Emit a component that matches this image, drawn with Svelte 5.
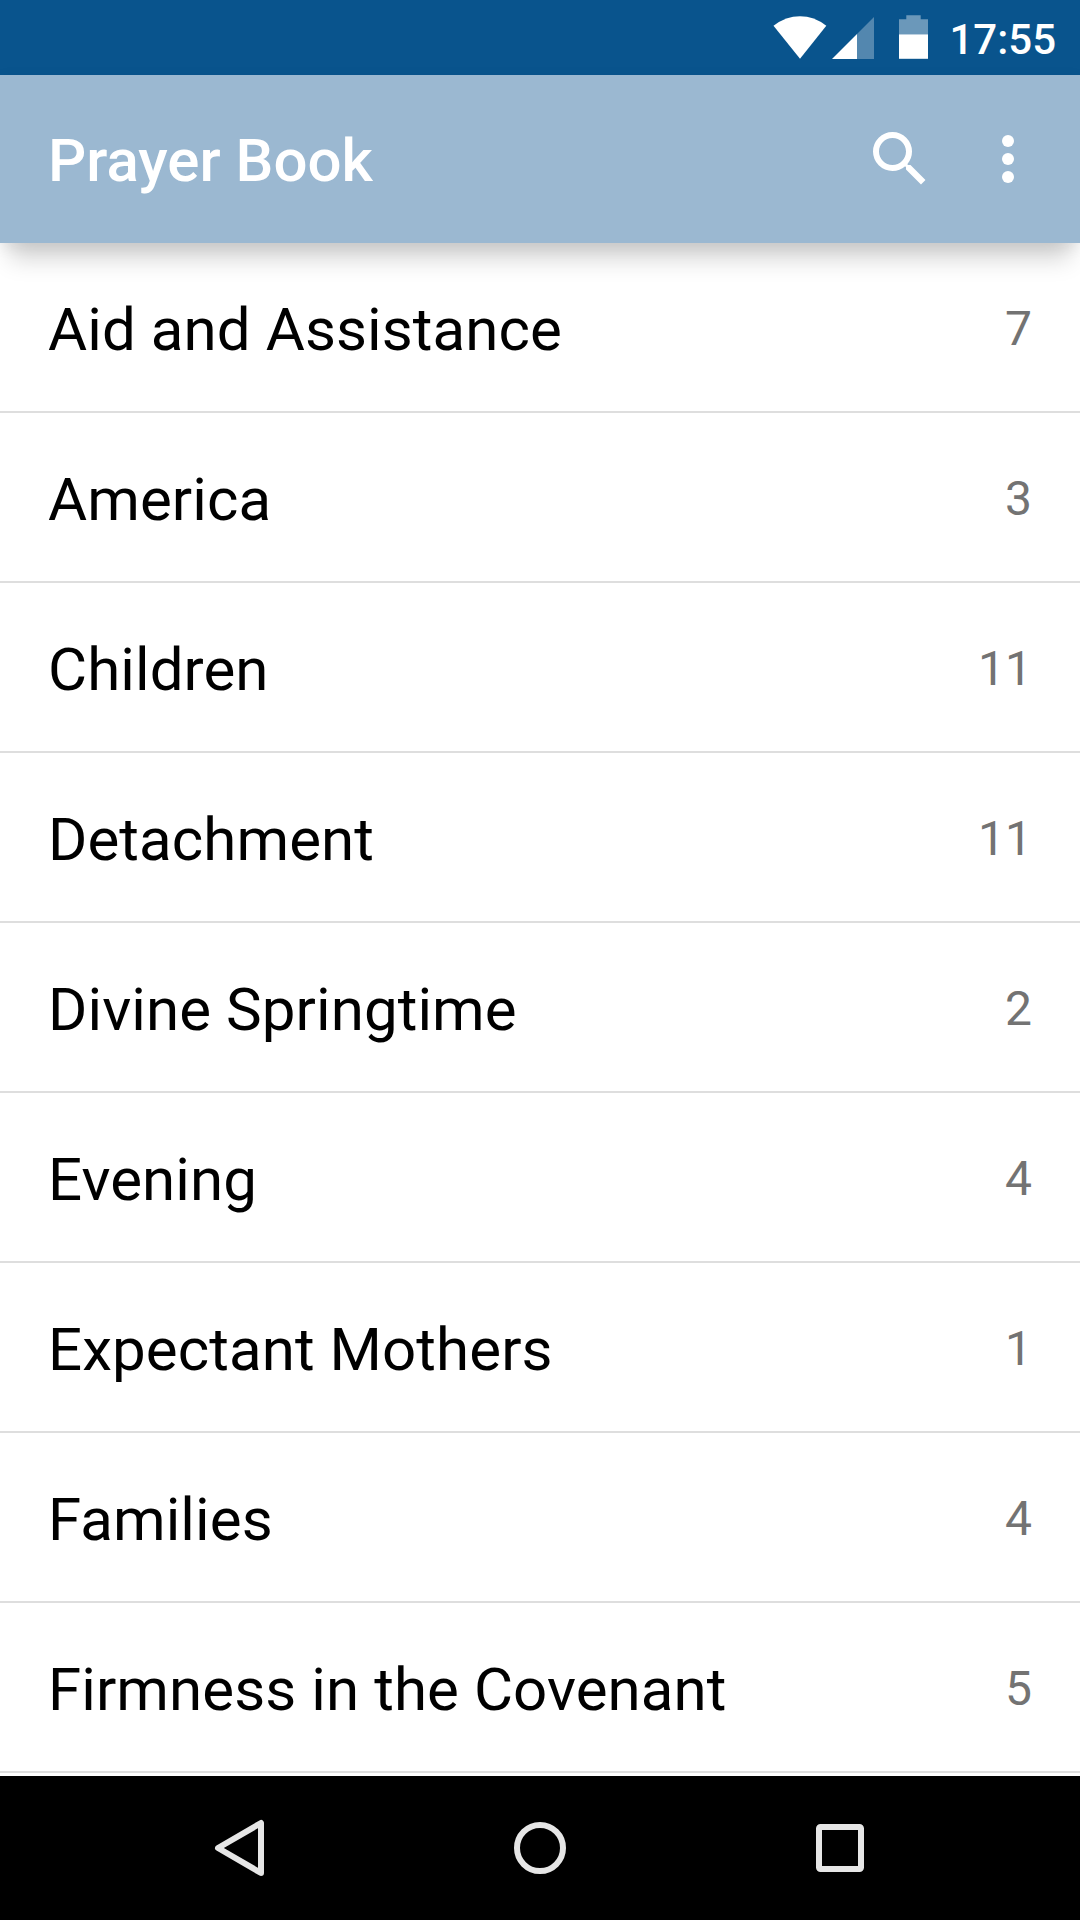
<script>
  const rows = [
    ['Aid and Assistance', 7], ['America', 3], ['Children', 11],
    ['Detachment', 11], ['Divine Springtime', 2], ['Evening', 4],
    ['Expectant Mothers', 1], ['Families', 4], ['Firmness in the Covenant', 5]
  ];
</script>

<div class="screen">
  <div class="status">
    <svg class="wifi" width="54" height="43" viewBox="0 0 54 43"><path d="M.5 9.7Q13 .3 27 .3T53.3 9.7L27 42.8Z" fill="#fff"/></svg>
    <svg class="cell" width="42" height="42" viewBox="0 0 42 42"><path d="M42 0V42H25V17Z" fill="#fff" fill-opacity=".3"/><path d="M25 17V42H0Z" fill="#fff"/></svg>
    <svg class="battery" width="29" height="44" viewBox="0 0 29 44"><path d="M7.3 .3H21.7V4.2H29V19.3H0V4.2H7.3Z" fill="#fff" fill-opacity=".4"/><path d="M0 19.3H29V43.8H0Z" fill="#fff"/></svg>
    <span class="clock">17:55</span>
  </div>
  <header>
    <h1>Prayer Book</h1>
    <svg class="search" width="72" height="72" viewBox="0 0 24 24"><path fill="#fff" d="M15.5 14h-.79l-.28-.27A6.47 6.47 0 0 0 16 9.5 6.5 6.5 0 1 0 9.5 16c1.61 0 3.09-.59 4.23-1.57l.27.28v.79l5 4.99L20.49 19l-4.99-5zm-6 0C7.01 14 5 11.99 5 9.5S7.01 5 9.5 5 14 7.01 14 9.5 11.99 14 9.5 14z"/></svg>
    <svg class="more" width="72" height="72" viewBox="0 0 24 24" fill="#fff"><circle cx="12" cy="6" r="2"/><circle cx="12" cy="12" r="2"/><circle cx="12" cy="18" r="2"/></svg>
  </header>
  <main>
    {#each rows as [name, count]}
      <div class="row"><span class="name">{name}</span><span class="count">{count}</span></div>
    {/each}
  </main>
  <nav>
    <svg width="1080" height="144" viewBox="0 0 1080 144" fill="none" stroke="#e6e6e6" stroke-width="6"><path d="M261 47V97L218 72Z" stroke-linejoin="round"/><circle cx="540" cy="72" r="23"/><rect x="819" y="51" width="42" height="42" rx="1.5"/></svg>
  </nav>
</div>

<style>
  :global(body) { margin: 0; background: #fff; }
  .screen { width: 1080px; height: 1920px; display: flex; flex-direction: column; overflow: hidden; font-family: Roboto, sans-serif; background: #fff; }
  .status { height: 75px; flex: none; background: #09548d; display: flex; align-items: flex-start; justify-content: flex-end; padding: 15px 24px 0 0; box-sizing: border-box; color: #fff; font-size: 42px; line-height: 49px; font-weight: 500; }
  .clock { width: 107px; text-align: right; }
  .wifi { margin-top: 1px; }
  .cell { margin: 2px 0 0 5px; }
  .battery { margin: 0 21px 0 25px; }
  header { height: 168px; flex: none; background: #9bb8d1; display: flex; align-items: center; padding: 0 36px 0 48px; box-shadow: 0 4px 14px rgba(0,0,0,.08), 0 26px 22px -10px rgba(0,0,0,.17); z-index: 1; }
  h1 { margin: 0; padding-top: 4px; flex: 1; color: #fff; font-size: 60px; font-weight: 500; line-height: 70px; }
  .search { margin-right: 36px; }
  main { flex: 1; overflow: hidden; }
  .row { height: 170px; box-sizing: border-box; border-bottom: 2px solid #dedede; display: flex; align-items: center; justify-content: space-between; padding: 0 48px; }
  .name { padding-top: 4px; font-size: 60px; letter-spacing: .09px; color: #000; }
  .count { padding-top: 2px; font-size: 48px; color: #737373; }
  nav { height: 144px; flex: none; background: #000; }
  svg { display: block; flex: none; }
</style>
